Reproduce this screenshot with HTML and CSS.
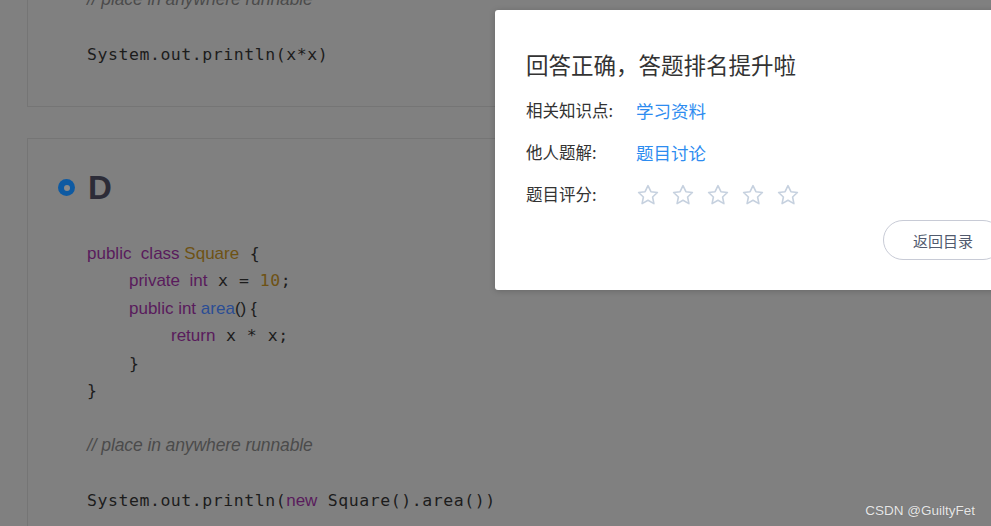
FILE: index.html
```html
<!DOCTYPE html>
<html lang="zh-CN">
<head>
    <meta charset="UTF-8">
    <meta name="viewport" content="width=device-width, initial-scale=1.0">
    <title>题目解析</title>
    <link rel="stylesheet" href="styles.css">
</head>
<body>
    <div class="page">
        <!-- Option C (tail) -->
        <div class="card">
            <div class="code">
                <div class="line comment">// place in anywhere runnable</div>
                <div class="line"> </div>
                <div class="line">System.out.println(x*x)</div>
            </div>
        </div>

        <!-- Option D -->
        <div class="card">
            <div class="option-head">
                <span class="radio"></span>
                <span class="option-label">D</span>
            </div>
            <div class="code">
                <div class="line"><span class="kw">public  class</span><span class="sans"> </span><span class="ty">Square</span> {</div>
                <div class="line indent-1"><span class="kw">private  int</span> x = <span class="num">10</span>;</div>
                <div class="line indent-1 sans"><span class="kw">public int</span> <span class="fn">area</span>() {</div>
                <div class="line indent-2"><span class="kw">return</span> x * x;</div>
                <div class="line indent-1">}</div>
                <div class="line">}</div>
                <div class="line"> </div>
                <div class="line comment">// place in anywhere runnable</div>
                <div class="line"> </div>
                <div class="line">System.out.println(<span class="kw">new</span> Square().area())</div>
            </div>
        </div>
    </div>

    <!-- Result dialog -->
    <div class="dialog">
        <div class="dialog-title">回答正确，答题排名提升啦</div>
        <div class="dialog-row">
            <span class="row-label">相关知识点:</span>
            <a class="row-link">学习资料</a>
        </div>
        <div class="dialog-row">
            <span class="row-label">他人题解:</span>
            <a class="row-link">题目讨论</a>
        </div>
        <div class="dialog-row">
            <span class="row-label">题目评分:</span>
            <div class="stars">
                <svg class="star" viewBox="0 0 24 24"><polygon points="12 2.6 14.9 8.7 21.4 9.5 16.6 14 17.9 20.6 12 17.3 6.1 20.6 7.4 14 2.6 9.5 9.1 8.7"/></svg>
                <svg class="star" viewBox="0 0 24 24"><polygon points="12 2.6 14.9 8.7 21.4 9.5 16.6 14 17.9 20.6 12 17.3 6.1 20.6 7.4 14 2.6 9.5 9.1 8.7"/></svg>
                <svg class="star" viewBox="0 0 24 24"><polygon points="12 2.6 14.9 8.7 21.4 9.5 16.6 14 17.9 20.6 12 17.3 6.1 20.6 7.4 14 2.6 9.5 9.1 8.7"/></svg>
                <svg class="star" viewBox="0 0 24 24"><polygon points="12 2.6 14.9 8.7 21.4 9.5 16.6 14 17.9 20.6 12 17.3 6.1 20.6 7.4 14 2.6 9.5 9.1 8.7"/></svg>
                <svg class="star" viewBox="0 0 24 24"><polygon points="12 2.6 14.9 8.7 21.4 9.5 16.6 14 17.9 20.6 12 17.3 6.1 20.6 7.4 14 2.6 9.5 9.1 8.7"/></svg>
            </div>
        </div>
        <div class="dialog-footer">
            <button class="btn-back">返回目录</button>
        </div>
    </div>

    <div class="watermark">CSDN @GuiltyFet</div>
</body>
</html>
```

FILE: styles.css
```css
* {
    margin: 0;
    padding: 0;
    box-sizing: border-box;
}

body {
    font-family: "Liberation Sans", Arial, "Noto Sans CJK SC", sans-serif;
    background-color: #808080;
    width: 991px;
    height: 526px;
    overflow: hidden;
    position: relative;
    color: #1c1c1c;
}

.page {
    margin-top: -40px;
    padding-left: 27px;
}

.card {
    width: 1000px;
    border: 1px solid #757575;
    border-right: none;
    padding: 25px 30px 37px 59px;
}

.card + .card {
    margin-top: 31px;
    padding: 29px 30px 40px 30px;
}

.option-head {
    display: flex;
    align-items: center;
    height: 40px;
}

.radio {
    width: 17px;
    height: 17px;
    border-radius: 50%;
    background: #0e5aa2;
    display: flex;
    align-items: center;
    justify-content: center;
    margin-right: 13px;
}

.radio::after {
    content: "";
    width: 6px;
    height: 6px;
    border-radius: 50%;
    background: #8a8a8a;
}

.option-label {
    font-size: 33px;
    font-weight: bold;
    color: #2c2c38;
    line-height: 40px;
}

.card + .card .code {
    margin-top: 32px;
    margin-left: 29px;
}

.code {
    font-family: "DejaVu Sans Mono", "Liberation Mono", monospace;
    font-size: 16.5px;
    letter-spacing: 0.55px;
}

.line {
    height: 27.5px;
    line-height: 27.5px;
    white-space: pre;
}

.indent-1 {
    padding-left: 42px;
}

.indent-2 {
    padding-left: 84px;
}

.kw,
.ty,
.fn,
.sans,
.comment {
    font-family: "Liberation Sans", Arial, sans-serif;
    font-size: 17px;
    letter-spacing: 0;
}

.kw {
    color: #591b5c;
}

.ty,
.num {
    color: #6e5214;
}

.fn {
    color: #2b4d94;
}

.comment {
    font-style: italic;
    font-size: 17.5px;
    letter-spacing: -0.1px;
    color: #4b4b4b;
}

/* dialog */
.dialog {
    position: absolute;
    left: 495px;
    top: 10px;
    width: 539px;
    height: 280px;
    background: white;
    border-radius: 3px;
    box-shadow: 0 1px 6px rgba(0, 0, 0, 0.2);
    padding: 39px 31px 30px 31px;
    font-family: "Noto Sans CJK SC", "Liberation Sans", sans-serif;
}

.dialog-title {
    font-size: 22.5px;
    line-height: 30px;
    color: #333;
    margin-bottom: 10px;
}

.dialog-row {
    display: flex;
    align-items: center;
    height: 42px;
    font-size: 16.5px;
    color: #333;
}

.row-label {
    width: 110px;
}

.row-link {
    color: #2d8cf0;
    font-size: 17.5px;
    cursor: pointer;
}

.stars {
    display: flex;
    gap: 11px;
    padding-top: 2px;
}

.star {
    width: 24px;
    height: 24px;
    fill: none;
    stroke: #c6d1df;
    stroke-width: 1.6;
    stroke-linejoin: round;
}

.dialog-footer {
    display: flex;
    justify-content: flex-end;
    margin-top: 5px;
}

.btn-back {
    width: 120px;
    height: 40px;
    border: 1px solid #c8cbd6;
    border-radius: 20px;
    background: white;
    font-family: "Noto Sans CJK SC", sans-serif;
    font-size: 15px;
    color: #515a6e;
    text-align: left;
    padding-left: 29px;
}

.watermark {
    position: absolute;
    right: 16px;
    bottom: 8px;
    font-size: 13.5px;
    color: #e6e6e6;
    text-shadow: 0 0 1px #666;
}
```
